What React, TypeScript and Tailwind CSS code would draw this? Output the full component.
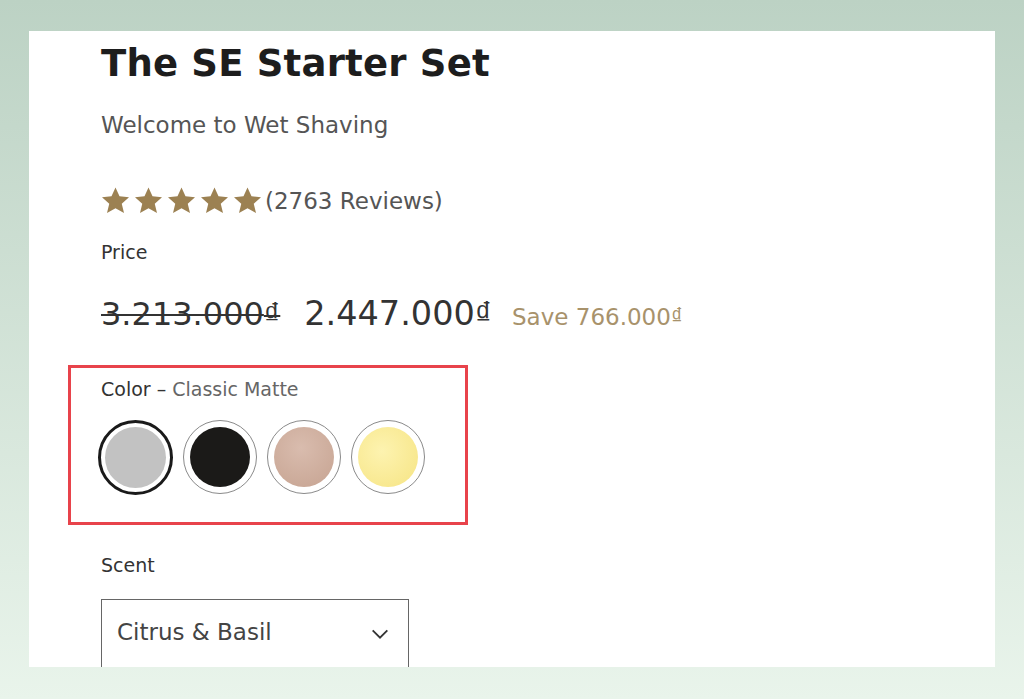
import React, { useState } from "react";

const swatches = [
  { name: "Classic Matte", color: "bg-[#c2c2c2]" },
  { name: "Black", color: "bg-[#1b1a18]" },
  { name: "Rose Gold", color: "bg-[radial-gradient(circle_at_45%_35%,#d9bcae,#c6a391)]" },
  { name: "Gold", color: "bg-[radial-gradient(circle_at_40%_40%,#fdf3b0,#f6e483)]" },
];

const Star = () => (
  <svg width="31" height="30" viewBox="0 0 24 24" className="fill-[#9c8152]">
    <path d="M12 1.2l3.2 7 7.6.8-5.8 5.1 1.8 7.5L12 17.8l-6.8 3.8 1.8-7.5-5.8-5.1 7.6-.8z" />
  </svg>
);

// dong sign drawn smaller, like the site's font does
const Dong = () => (
  <span style={{ fontFamily: '"Liberation Sans", Arial, sans-serif' }}>₫</span>
);

const App = () => {
  const [selected, setSelected] = useState(0);

  return (
    <div
      className="w-[1024px] h-[699px] overflow-hidden bg-gradient-to-b from-[#bcd2c4] to-[#e9f4eb] pt-[31px] pl-[29px]"
      style={{ fontFamily: '"DejaVu Sans", "Liberation Sans", sans-serif' }}
    >
      <div className="w-[966px] h-[636px] bg-white overflow-hidden pl-[72px] pt-[9px]">
        <h1 className="text-[37px] leading-[48px] font-bold tracking-[0.2px] text-[#1d1d1d]">
          The SE Starter Set
        </h1>
        <p className="mt-[23px] text-[23px] leading-[28px] text-[#555]">
          Welcome to Wet Shaving
        </p>

        <div className="mt-[47px] flex items-center">
          <div className="flex gap-[2px] -ml-[1px]">
            {[0, 1, 2, 3, 4].map((i) => (
              <Star key={i} />
            ))}
          </div>
          <span className="ml-[2px] text-[23px] leading-[28px] text-[#555]">
            (2763 Reviews)
          </span>
        </div>

        <p className="mt-[25px] text-[19px] leading-[22px] text-[#333]">Price</p>

        <div className="mt-[33px] flex items-baseline">
          <span className="text-[32px] leading-[36px] text-[#333] line-through decoration-[2px]">
            3.213.000<Dong />
          </span>
          <span className="ml-[24px] text-[33.5px] leading-[36px] text-[#333]">
            2.447.000<Dong />
          </span>
          <span className="ml-[20px] text-[23px] leading-[28px] text-[#a8926b]">
            Save 766.000<Dong />
          </span>
        </div>

        <div className="-ml-[33px] mt-[33px] w-[400px] h-[160px] border-[3px] border-[#e8434b] pl-[30px] pt-[10px]">
          <p className="text-[19px] leading-[22px] text-[#333]">
            Color – <span className="text-[#666]">{swatches[selected].name}</span>
          </p>
          <div className="mt-[20px] flex gap-[10px] -ml-[3px]">
            {swatches.map((s, i) => (
              <button
                key={s.name}
                onClick={() => setSelected(i)}
                className={
                  i === selected
                    ? "w-[75px] h-[75px] rounded-full border-[3px] border-[#1a1a1a] p-[4px]"
                    : "w-[74px] h-[74px] rounded-full border border-[#8a8a8a] p-[6px]"
                }
              >
                <span className={`block w-full h-full rounded-full ${s.color}`} />
              </button>
            ))}
          </div>
        </div>

        <p className="mt-[29px] text-[19px] leading-[22px] text-[#333]">Scent</p>

        <div className="mt-[23px] w-[308px] h-[80px] border border-[#666] flex items-start justify-between pl-[15px] pr-[17px] pt-[18px]">
          <span className="text-[23px] leading-[28px] text-[#444]">Citrus &amp; Basil</span>
          <svg width="22" height="22" viewBox="0 0 24 24" fill="none" stroke="#333" strokeWidth="2" className="mt-[5px]">
            <path d="M4 8l8 8 8-8" />
          </svg>
        </div>
      </div>
    </div>
  );
};

export default App;
